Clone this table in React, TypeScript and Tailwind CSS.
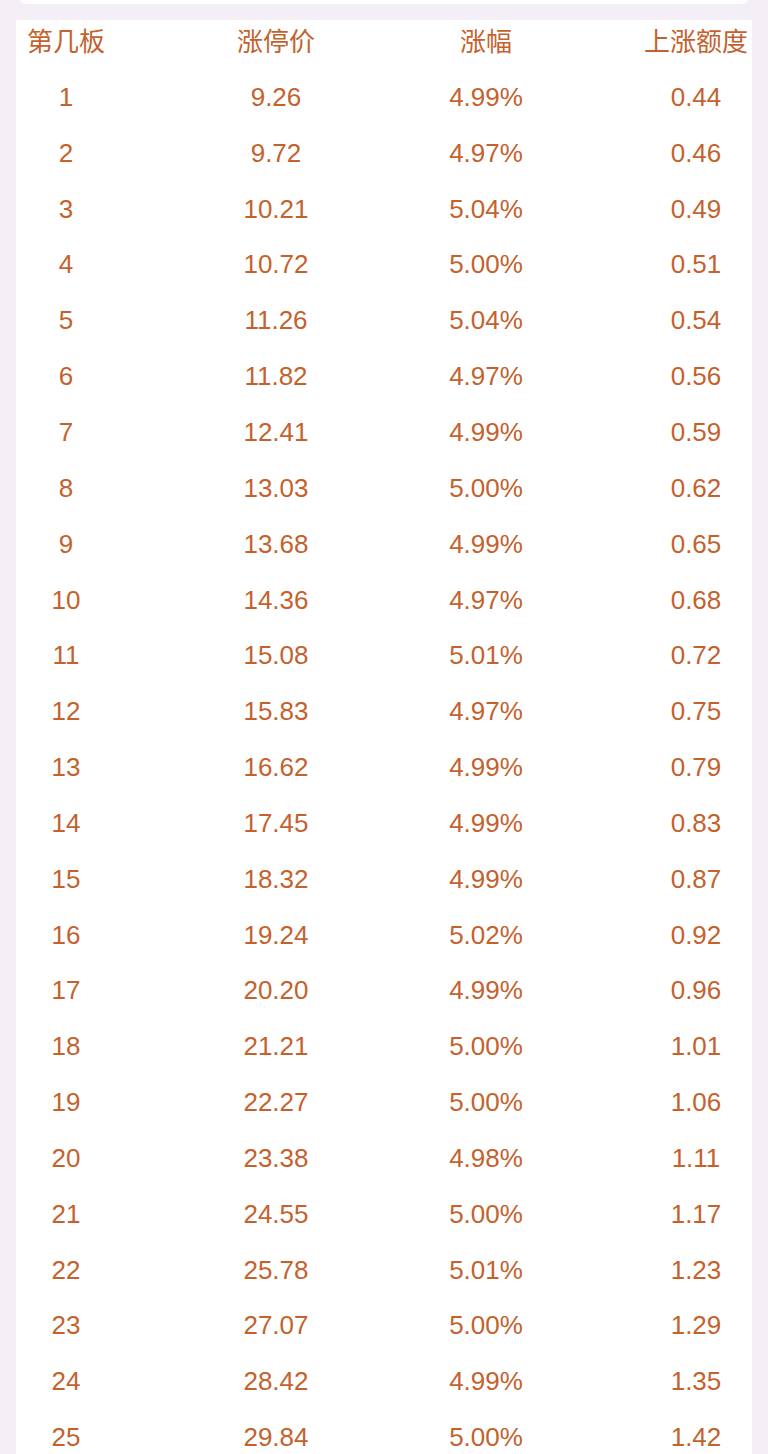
import React from "react";

const rows: [string, string, string, string][] = [
  ["1", "9.26", "4.99%", "0.44"],
  ["2", "9.72", "4.97%", "0.46"],
  ["3", "10.21", "5.04%", "0.49"],
  ["4", "10.72", "5.00%", "0.51"],
  ["5", "11.26", "5.04%", "0.54"],
  ["6", "11.82", "4.97%", "0.56"],
  ["7", "12.41", "4.99%", "0.59"],
  ["8", "13.03", "5.00%", "0.62"],
  ["9", "13.68", "4.99%", "0.65"],
  ["10", "14.36", "4.97%", "0.68"],
  ["11", "15.08", "5.01%", "0.72"],
  ["12", "15.83", "4.97%", "0.75"],
  ["13", "16.62", "4.99%", "0.79"],
  ["14", "17.45", "4.99%", "0.83"],
  ["15", "18.32", "4.99%", "0.87"],
  ["16", "19.24", "5.02%", "0.92"],
  ["17", "20.20", "4.99%", "0.96"],
  ["18", "21.21", "5.00%", "1.01"],
  ["19", "22.27", "5.00%", "1.06"],
  ["20", "23.38", "4.98%", "1.11"],
  ["21", "24.55", "5.00%", "1.17"],
  ["22", "25.78", "5.01%", "1.23"],
  ["23", "27.07", "5.00%", "1.29"],
  ["24", "28.42", "4.99%", "1.35"],
  ["25", "29.84", "5.00%", "1.42"],
];

function Row({ cells, header }: { cells: string[]; header?: boolean }) {
  return (
    <div
      className={
        "grid grid-cols-[100px_100px_100px_100px] gap-x-[110px] " +
        (header ? "h-[44px]" : "h-[55.85px]")
      }
    >
      {cells.map((c, i) => (
        <div key={i} className="flex items-center justify-center whitespace-nowrap">
          {c}
        </div>
      ))}
    </div>
  );
}

export default function App() {
  return (
    <div
      className="h-[1454px] overflow-hidden bg-[#f4eff7] text-[#c4622e] text-[26px] leading-none"
      style={{ fontFamily: '"Liberation Sans", "Noto Sans CJK SC", sans-serif' }}
    >
      <div className="mx-[16px] h-[4px] overflow-hidden flex flex-col justify-end">
        <div className="h-[30px] shrink-0 bg-white rounded-[12px]" />
      </div>
      <div className="mx-[16px] mt-[16px] bg-white pb-[40px]">
        <Row cells={["第几板", "涨停价", "涨幅", "上涨额度"]} header />
        <div className="mt-[5px]">
          {rows.map((r, i) => (
            <Row key={i} cells={r} />
          ))}
        </div>
      </div>
    </div>
  );
}
